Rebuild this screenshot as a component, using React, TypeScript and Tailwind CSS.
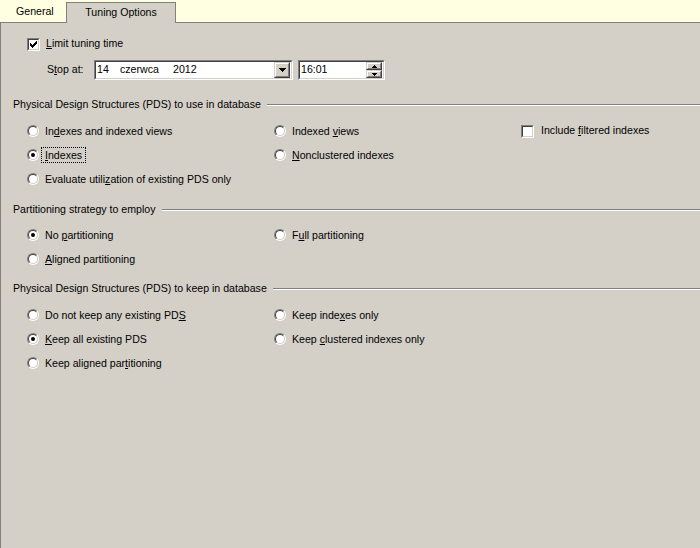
import React from 'react';

function Radio({ checked }: { checked?: boolean }) {
  return (
    <span className="flex w-3 h-3 shrink-0 rounded-full border border-t-[#808080] border-l-[#808080] border-b-white border-r-white">
      <span className="flex w-full h-full items-center justify-center rounded-full border border-t-[#404040] border-l-[#404040] border-b-[#d4d0c8] border-r-[#d4d0c8] bg-white">
        {checked && <span className="w-1 h-1 rounded-full bg-black" />}
      </span>
    </span>
  );
}

function Check({ checked }: { checked?: boolean }) {
  return (
    <span className="flex w-[13px] h-[13px] shrink-0 border border-t-[#808080] border-l-[#808080] border-b-white border-r-white">
      <span className="flex w-full h-full items-center justify-center border border-t-[#404040] border-l-[#404040] border-b-[#d4d0c8] border-r-[#d4d0c8] bg-white">
        {checked && (
          <svg width="7" height="7" viewBox="0 0 7 7" shapeRendering="crispEdges">
            <path d="M0 2h1v3H0zM1 3h1v3H1zM2 4h1v3H2zM3 3h1v3H3zM4 2h1v3H4zM5 1h1v3H5zM6 0h1v3H6z" fill="#000" />
          </svg>
        )}
      </span>
    </span>
  );
}

function RadioItem({ checked, focused, children }: { checked?: boolean; focused?: boolean; children: React.ReactNode }) {
  return (
    <div className="h-6 flex items-center">
      <Radio checked={checked} />
      <span
        className={
          focused
            ? 'ml-[2px] px-[3px] leading-[14px] border border-dotted border-black'
            : 'ml-[6px] leading-[14px]'
        }
      >
        {children}
      </span>
    </div>
  );
}

function Heading({ children, className }: { children: React.ReactNode; className: string }) {
  return (
    <div className={`flex items-center h-[14px] pl-3 ${className}`}>
      <span className="whitespace-nowrap">{children}</span>
      <div className="flex-1 ml-[6px] h-[2px] border-t border-b border-t-[#808080] border-b-white" />
    </div>
  );
}

function RaisedButton({ children, className }: { children: React.ReactNode; className: string }) {
  return (
    <div className={`flex border border-t-[#d4d0c8] border-l-[#d4d0c8] border-b-[#404040] border-r-[#404040] bg-[#d4d0c8] ${className}`}>
      <div className="flex flex-1 items-center justify-center border border-t-white border-l-white border-b-[#808080] border-r-[#808080]">
        {children}
      </div>
    </div>
  );
}

function SunkenBox({ children, className }: { children: React.ReactNode; className: string }) {
  return (
    <div className={`flex border border-t-[#808080] border-l-[#808080] border-b-white border-r-white ${className}`}>
      <div className="flex flex-1 items-center bg-white border border-t-[#404040] border-l-[#404040] border-b-[#d4d0c8] border-r-[#d4d0c8]">
        {children}
      </div>
    </div>
  );
}

export default function App() {
  return (
    <div className="w-[700px] h-[548px] overflow-hidden text-[10.6px] text-black font-['Liberation_Sans',Arial,sans-serif] bg-[#d4d0c8]">
      {/* Tab strip */}
      <div className="h-[23px] flex items-end bg-[#ffffe1] border-b border-[#808080]">
        <div className="w-[66px] h-[21px] flex items-center pl-4">General</div>
        <div className="w-[110px] h-[21px] -mb-px flex items-center justify-center bg-[#d4d0c8] border-l border-t border-r border-[#808080]">
          Tuning Options
        </div>
      </div>

      {/* Panel */}
      <div className="h-[525px] border-l border-[#808080] pt-[13px]">
        <div className="h-4 flex items-center pl-[26px]">
          <Check checked />
          <span className="ml-[6px]">
            <u>L</u>imit tuning time
          </span>
        </div>

        <div className="mt-[8px] h-5 flex items-center pl-[46px]">
          <span className="w-[47px]">
            S<u>t</u>op at:
          </span>
          <SunkenBox className="w-[199px] h-5">
            <span className="flex-1 flex pl-[1px]">
              <span className="w-[23px]">14</span>
              <span className="w-[53px]">czerwca</span>
              <span>2012</span>
            </span>
            <RaisedButton className="w-4 h-4 mr-[1px]">
              <svg width="7" height="4" viewBox="0 0 7 4" shapeRendering="crispEdges">
                <path d="M0 0h7L3.5 4z" fill="#000" />
              </svg>
            </RaisedButton>
          </SunkenBox>
          <SunkenBox className="ml-[5px] w-[87px] h-5">
            <span className="flex-1 pl-[1px]">16:01</span>
            <div className="flex flex-col w-4 h-4 mr-[1px]">
              <RaisedButton className="h-2">
                <svg width="5" height="3" viewBox="0 0 5 3" shapeRendering="crispEdges">
                  <path d="M2 0h1v1h1v1h1v1H0V2h1V1h1z" fill="#000" />
                </svg>
              </RaisedButton>
              <RaisedButton className="h-2">
                <svg width="5" height="3" viewBox="0 0 5 3" shapeRendering="crispEdges">
                  <path d="M0 0h5v1H4v1H3v1H2V2H1V1H0z" fill="#000" />
                </svg>
              </RaisedButton>
            </div>
          </SunkenBox>
        </div>

        <Heading className="mt-[18px]">Physical Design Structures (PDS) to use in database</Heading>
        <div className="mt-[7px] pl-[26px] grid grid-cols-[247px_247px_auto]">
          <RadioItem>
            In<u>d</u>exes and indexed views
          </RadioItem>
          <RadioItem>
            Indexed <u>v</u>iews
          </RadioItem>
          <div className="h-6 flex items-center">
            <Check />
            <span className="ml-[7px]">
              Include <u>f</u>iltered indexes
            </span>
          </div>
          <RadioItem checked focused>
            <u>I</u>ndexes
          </RadioItem>
          <RadioItem>
            <u>N</u>onclustered indexes
          </RadioItem>
          <div />
          <RadioItem>
            Evaluate utili<u>z</u>ation of existing PDS only
          </RadioItem>
        </div>

        <Heading className="mt-[12px]">Partitioning strategy to employ</Heading>
        <div className="mt-[6px] pl-[26px] grid grid-cols-[247px_247px_auto]">
          <RadioItem checked>
            No <u>p</u>artitioning
          </RadioItem>
          <RadioItem>
            F<u>u</u>ll partitioning
          </RadioItem>
          <div />
          <RadioItem>
            <u>A</u>ligned partitioning
          </RadioItem>
        </div>

        <Heading className="mt-[11px]">Physical Design Structures (PDS) to keep in database</Heading>
        <div className="mt-[7px] pl-[26px] grid grid-cols-[247px_247px_auto]">
          <RadioItem>
            Do not keep any existing PD<u>S</u>
          </RadioItem>
          <RadioItem>
            Keep inde<u>x</u>es only
          </RadioItem>
          <div />
          <RadioItem checked>
            <u>K</u>eep all existing PDS
          </RadioItem>
          <RadioItem>
            Keep <u>c</u>lustered indexes only
          </RadioItem>
          <div />
          <RadioItem>
            Keep aligned par<u>t</u>itioning
          </RadioItem>
        </div>
      </div>
    </div>
  );
}
